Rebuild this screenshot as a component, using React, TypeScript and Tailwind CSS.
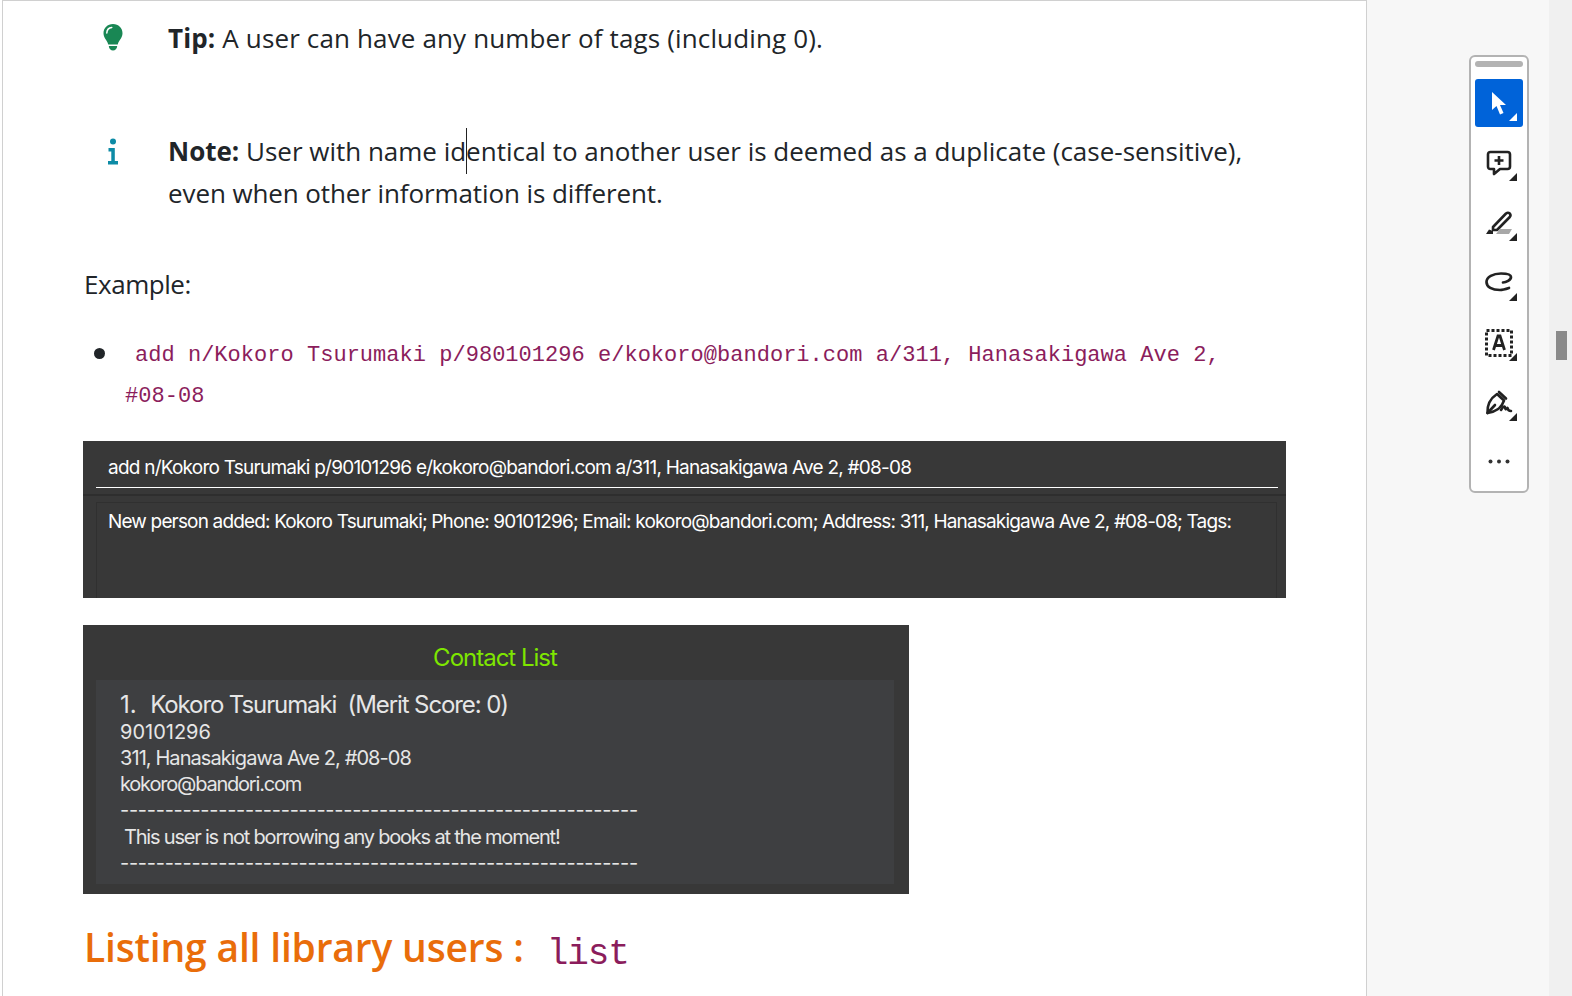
const sans = "font-['Open_Sans',sans-serif]";

function Corner({ white }: { white?: boolean }) {
  return (
    <svg width="8" height="8" viewBox="0 0 8 8" className="absolute right-[6px] bottom-[6px]">
      <path d="M8 0V8H0Z" fill={white ? "#fff" : "#222"} />
    </svg>
  );
}

function ToolBtn({ children, active, corner = true }: { children: React.ReactNode; active?: boolean; corner?: boolean }) {
  return (
    <div className={`relative w-[48px] h-[48px] rounded-[3px] flex items-center justify-center ${active ? "bg-[#0063d9]" : ""}`}>
      {children}
      {corner && <Corner white={active} />}
    </div>
  );
}

export default function App() {
  return (
    <div className="flex w-[1572px] h-[996px] overflow-hidden bg-[#f0f0f0] text-[#212529]">
      <div className="w-[2px] shrink-0 h-full bg-white" />
      <main className="w-[1365px] shrink-0 h-full bg-white border-l border-r border-t border-[#d0d0d0] overflow-hidden">
        <div className={`w-[1200px] ml-[81px] ${sans} text-[26px] leading-[42px] tracking-[-0.45px]`}>
          <div className="flex pt-[16px] h-[129px]">
            <div className="w-[58px] pl-[19px] pt-[7px] shrink-0">
              <svg width="20" height="27" viewBox="0 0 20 27">
                <path d="M10 0C4.500 0 .5 4 .5 9.200c0 5 4 7.300 4.700 11.300h9.600c.7-4 4.700-6.300 4.700-11.300C19.500 4 15.500 0 10 0Z" fill="#198754" />
                <path d="M3.800 9C3.900 6 6 3.700 8.800 3.400" stroke="#fff" strokeWidth="1.500" fill="none" strokeLinecap="round" />
                <path d="M5.800 22h8.400c-.2 2.800-2 4.600-4.200 4.600S6 24.800 5.800 22Z" fill="#198754" />
              </svg>
            </div>
            <p className="ml-[26px] tracking-[0.14px]"><b className="font-bold">Tip:</b> A user can have any number of tags (including 0).</p>
          </div>
          <div className="flex">
            <div className="w-[58px] pl-[23px] pt-[8px] shrink-0">
              <svg width="12" height="27" viewBox="0 0 12 27">
                <circle cx="6" cy="3.500" r="3" fill="#0d8ba6" />
                <path d="M1.500 10H7.800V23H11V26.500H1V23H4.300V13.500H1.500Z" fill="#0d8ba6" />
              </svg>
            </div>
            <p className="ml-[26px] w-[1090px] relative">
              <span className="block tracking-[-0.01px] whitespace-nowrap"><b className="font-bold">Note:</b> User with name identical to another user is deemed as a duplicate (case-sensitive),</span>
              <span className="block tracking-[-0.1px] whitespace-nowrap">even when other information is different.</span>
              <span className="absolute left-[298px] top-[-2px] w-px h-[46px] bg-[#222]" />
            </p>
          </div>
          <p className="mt-[49px]">Example:</p>
          <div className="flex mt-[30px] font-['Liberation_Mono',monospace] text-[#8b1d5c] text-[22px] leading-[41px] tracking-[0.025px]">
            <span className="w-[41px] shrink-0 pl-[10px] flex pt-[13px]"><span className="block w-[11px] h-[11px] rounded-full bg-[#212529]" /></span>
            <p className="w-[1120px] indent-[10px]">add n/Kokoro Tsurumaki p/980101296 e/kokoro@bandori.com a/311, Hanasakigawa Ave 2, #08-08</p>
          </div>
        </div>

        <div className="ml-[80px] mt-[24px] w-[1203px] h-[157px] overflow-hidden bg-[#383838] font-['Inter',sans-serif] text-white text-[19px]">
          <div className="h-[47px] ml-[13px] mr-[8px] px-[12px] pt-[15px] leading-[24px] tracking-[-0.77px] border-b-[1.500px] border-white">add n/Kokoro Tsurumaki p/90101296 e/kokoro@bandori.com a/311, Hanasakigawa Ave 2, #08-08</div>
          <div className="h-[2px] mt-[6px] bg-[#2e2e2e]" />
          <div className="ml-[13px] mr-[9px] mt-[6px] h-[100px] border-l border-r border-t border-[#303030] pl-[11px] pr-[12px] pt-[7px] leading-[24px] tracking-[-0.84px]">New person added: Kokoro Tsurumaki; Phone: 90101296; Email: kokoro@bandori.com; Address: 311, Hanasakigawa Ave 2, #08-08; Tags:</div>
        </div>

        <div className="ml-[80px] mt-[27px] w-[826px] h-[269px] bg-[#383838] font-['Inter',sans-serif] pt-[19px]">
          <div className="text-center text-[#7ee600] text-[24px] leading-[28px] tracking-[-1px] pr-[2px]">Contact List</div>
          <div className="mx-[13px] mt-[8px] w-[798px] h-[204px] bg-[#3e3f41] pl-[24px] pt-[10px] text-[#e6e6e6] text-[20px] leading-[26px] tracking-[-0.5px]">
            <div className="text-[24px] leading-[29px] tracking-[-1.1px] whitespace-pre"><span className="tracking-[0px]">1.  </span>Kokoro Tsurumaki  (Merit Score: 0)</div>
            <div className="tracking-[0px]">90101296</div>
            <div className="tracking-[-0.92px]">311, Hanasakigawa Ave 2, #08-08</div>
            <div className="tracking-[-1.2px]">kokoro@bandori.com</div>
            <div className="tracking-[-0.27px] h-[27px] overflow-hidden">----------------------------------------------------------</div>
            <div className="pl-[4px] tracking-[-1.2px]">This user is not borrowing any books at the moment!</div>
            <div className="tracking-[-0.27px] h-[26px] overflow-hidden">----------------------------------------------------------</div>
          </div>
        </div>

        <h2 className={`ml-[81px] mt-[25px] ${sans} text-[39px] leading-[56px] font-semibold text-[#e96d0a] tracking-[-0.18px] flex items-baseline`}>
          Listing all library users :
          <code className="ml-[23px] font-['Liberation_Mono',monospace] font-normal text-[#8b1d5c] text-[36px] tracking-[-1.100px] translate-y-[2px]">list</code>
        </h2>
      </main>

      <aside className="w-[182px] shrink-0 h-full bg-[#f7f7f7] pl-[102px] pt-[55px]">
        <div className="w-[60px] h-[438px] bg-white border-2 border-[#b3b3b3] rounded-[6px] flex flex-col items-center pt-[4px]">
          <div className="w-[48px] h-[6px] rounded-[3px] bg-[#b3b3b3] mb-[12px]" />
          <div className="flex flex-col gap-[12px]">
            <ToolBtn active>
              <svg width="16" height="24" viewBox="0 0 16 24"><path d="M1 1V19L5.500 15L9 23.500L12.500 22L9 14H15Z" fill="#fff" /></svg>
            </ToolBtn>
            <ToolBtn>
              <svg width="26" height="26" viewBox="0 0 26 26" fill="none" stroke="#222" strokeWidth="2.600">
                <path d="M4.500 2H21.500Q24 2 24 4.500V16.500Q24 19 21.500 19H14L8 24V19H4.500Q2 19 2 16.500V4.500Q2 2 4.500 2Z" strokeLinejoin="round" />
                <path d="M13 6V15M8.500 10.500H17.500" />
              </svg>
            </ToolBtn>
            <ToolBtn>
              <svg width="28" height="26" viewBox="0 0 28 26">
                <path d="M8 17L21 3.500Q23 2 24.800 3.500Q26.200 5.300 24.800 7L12 20H8Z" fill="none" stroke="#222" strokeWidth="2.600" strokeLinejoin="round" />
                <path d="M1 24L4 19.500L8 21L8 24Z" fill="#222" />
                <path d="M11 24L15 19H27L24 24Z" fill="#a8a8a8" />
              </svg>
            </ToolBtn>
            <ToolBtn>
              <svg width="28" height="22" viewBox="0 0 28 22" fill="none" stroke="#222" strokeWidth="2.700" strokeLinecap="round">
                <path d="M18 10.500C21 10.500 26 8 26 5C26 2 21 1.500 16 1.500C8 1.500 1.500 5 1.500 10C1.500 15 7 18 15 18C18 18 21 17 24 16" />
              </svg>
            </ToolBtn>
            <ToolBtn>
              <svg width="28" height="28" viewBox="0 0 28 28">
                <rect x="1.500" y="1.500" width="25" height="25" fill="none" stroke="#222" strokeWidth="3" strokeDasharray="3 2" />
                <path d="M8.500 21L13 7H15L19.500 21M10.500 16.500H17.500" fill="none" stroke="#222" strokeWidth="2.800" />
              </svg>
            </ToolBtn>
            <ToolBtn>
              <svg width="28" height="26" viewBox="0 0 28 26" fill="none" stroke="#222" strokeWidth="2.600" strokeLinejoin="round" strokeLinecap="round">
                <path d="M14 2L21 8.500M12 4L19 10.500C17 17 13 21 2.500 23C2 14 6 8 12 4Z" />
                <path d="M2.500 23L10 15" />
                <path d="M16 20Q19 15 20 17Q20 21 22.500 18Q23 21 26 21" />
              </svg>
            </ToolBtn>
            <div className="relative w-[48px] h-[48px] flex items-center justify-center pb-[4px]">
              <svg width="22" height="5" viewBox="0 0 22 5" fill="#333"><circle cx="2.500" cy="2.500" r="2" /><circle cx="11" cy="2.500" r="2" /><circle cx="19.500" cy="2.500" r="2" /></svg>
            </div>
          </div>
        </div>
      </aside>

      <div className="w-[21px] shrink-0 h-full bg-[#f0f0f0] pl-[7px] pt-[331px]">
        <div className="w-[11px] h-[29px] bg-[#8a8a8a]" />
      </div>
    </div>
  );
}
